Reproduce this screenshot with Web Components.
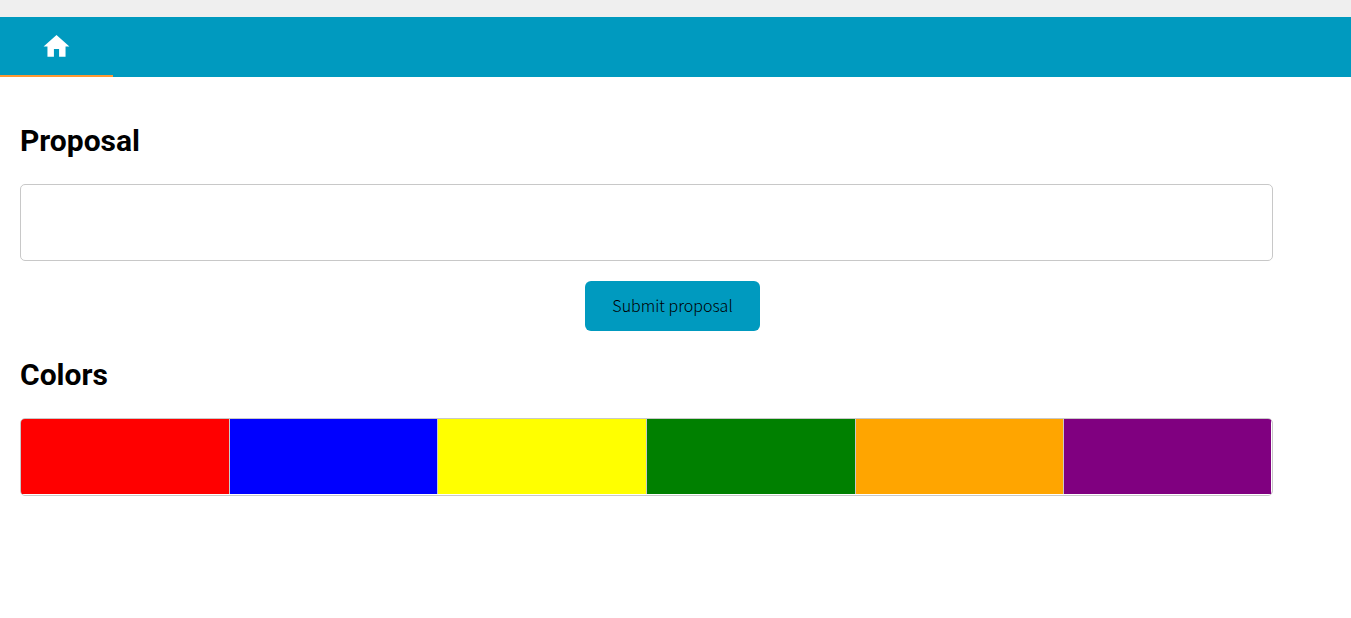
<!DOCTYPE html>
<html lang="en">
<head>
<meta charset="utf-8">
<title>Proposal</title>
<style>
body { margin: 0; background: #fff; color: #000; font-family: Roboto, sans-serif; }
</style>
</head>
<body>
<app-nav></app-nav>
<app-main>
  <app-section heading="Proposal"><drop-zone></drop-zone></app-section>
  <submit-button>Submit proposal</submit-button>
  <app-section heading="Colors"><color-palette colors="red blue yellow green orange purple"></color-palette></app-section>
</app-main>
<script>
const define = (name, html, setup) => {
  const template = document.createElement('template');
  template.innerHTML = html;
  customElements.define(name, class extends HTMLElement {
    constructor() {
      super();
      this.attachShadow({ mode: 'open' }).append(template.content.cloneNode(true));
    }
    connectedCallback() {
      if (setup && !this.ready) { this.ready = true; setup(this, this.shadowRoot); }
    }
  });
};

define('app-nav', `
<style>
:host { display: block; border-top: 17px solid #efefef; background: #009abf; }
nav { display: flex; }
a { box-sizing: border-box; width: 113px; height: 60px; display: flex; align-items: center; justify-content: center; padding-top: 1px; border-bottom: 2px solid #ff9933; color: #fff; }
svg { display: block; width: 31px; height: 31px; fill: currentColor; }
</style>
<nav aria-label="Main"><a href="#" aria-label="Home">
<svg viewBox="0 0 24 24" aria-hidden="true"><path d="M10 20v-6h4v6h5v-8h3L12 3 2 12h3v8z"/></svg></a></nav>`);

define('app-main', `
<style>
:host { display: block; padding: 43px 26px 24px 20px; }
main { display: flex; flex-direction: column; }
</style>
<main><slot></slot></main>`);

define('app-section', `
<style>
:host { display: block; }
h2 { margin: 0 0 22px; font-size: 30px; line-height: 42px; font-weight: 700; }
</style>
<section aria-labelledby="title"><h2 id="title"></h2><slot></slot></section>`,
(el, root) => { root.querySelector('h2').textContent = el.getAttribute('heading'); });

define('drop-zone', `
<style>
:host { display: block; width: 96%; }
div { box-sizing: border-box; min-height: 77px; display: flex; border: 1px solid #c8c8c8; border-radius: 5px; overflow: hidden; }
span { flex: 1; border-right: 1px solid #c8c8c8; }
</style>
<div role="list" aria-label="Proposal"></div>`,
(el, root) => {
  const zone = root.querySelector('div');
  zone.addEventListener('dragover', e => e.preventDefault());
  zone.addEventListener('drop', e => {
    e.preventDefault();
    const item = document.createElement('span');
    item.setAttribute('role', 'listitem');
    item.style.background = e.dataTransfer.getData('text/plain');
    zone.append(item);
  });
});

define('submit-button', `
<style>
:host { display: flex; justify-content: center; margin: 20px 0 23px; }
button { width: 175px; height: 50px; padding: 0 0 2px; border: 0; border-radius: 6px; background: #009abf; color: #000; font: 300 16px/24px "Noto Sans CJK SC", sans-serif; cursor: pointer; }
</style>
<button type="button"><slot></slot></button>`);

define('color-palette', `
<style>
:host { display: block; width: 96%; }
div { box-sizing: border-box; display: grid; grid-auto-flow: column; grid-auto-columns: minmax(0, 1fr); gap: 1px; padding-bottom: 1px; border: 1px solid #c8c8c8; border-radius: 5px; overflow: hidden; background: #c8c8c8 content-box; }
button { height: 75px; margin: 0; padding: 0; border: 0; border-radius: 0; cursor: grab; }
button:last-child { border-right: 1px solid #fff; }
</style>
<div role="group" aria-label="Colors"></div>`,
(el, root) => {
  for (const color of el.getAttribute('colors').split(' ')) {
    const swatch = document.createElement('button');
    swatch.type = 'button';
    swatch.draggable = true;
    swatch.setAttribute('aria-label', color);
    swatch.style.backgroundColor = color;
    swatch.addEventListener('dragstart', e => e.dataTransfer.setData('text/plain', color));
    root.querySelector('div').append(swatch);
  }
});
</script>
</body>
</html>
